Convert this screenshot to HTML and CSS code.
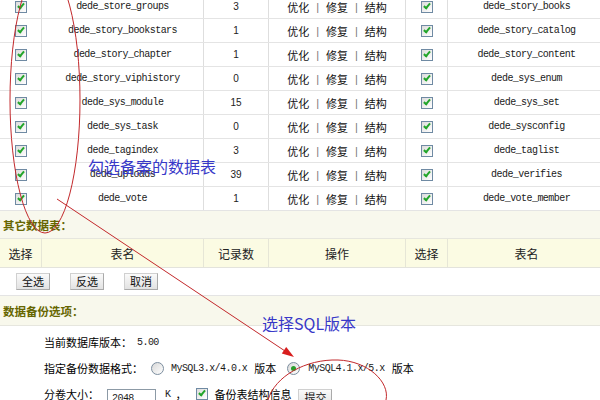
FILE: index.html
```
<!DOCTYPE html>
<html lang="zh">
<head>
<meta charset="utf-8">
<link rel="stylesheet" href="styles.css">
</head>
<body>
<div class="page">
  <div class="tbl">
    <div class="row"><div class="c"><span class="cb"></span></div><div class="c mono">dede_store_groups</div><div class="c num">3</div><div class="c ops"><span>优化</span><span class="sep">|</span><span>修复</span><span class="sep">|</span><span>结构</span></div><div class="c"><span class="cb"></span></div><div class="c mono">dede_story_books</div></div>
    <div class="row"><div class="c"><span class="cb"></span></div><div class="c mono">dede_story_bookstars</div><div class="c num">1</div><div class="c ops"><span>优化</span><span class="sep">|</span><span>修复</span><span class="sep">|</span><span>结构</span></div><div class="c"><span class="cb"></span></div><div class="c mono">dede_story_catalog</div></div>
    <div class="row"><div class="c"><span class="cb"></span></div><div class="c mono">dede_story_chapter</div><div class="c num">1</div><div class="c ops"><span>优化</span><span class="sep">|</span><span>修复</span><span class="sep">|</span><span>结构</span></div><div class="c"><span class="cb"></span></div><div class="c mono">dede_story_content</div></div>
    <div class="row"><div class="c"><span class="cb"></span></div><div class="c mono">dede_story_viphistory</div><div class="c num">0</div><div class="c ops"><span>优化</span><span class="sep">|</span><span>修复</span><span class="sep">|</span><span>结构</span></div><div class="c"><span class="cb"></span></div><div class="c mono">dede_sys_enum</div></div>
    <div class="row"><div class="c"><span class="cb"></span></div><div class="c mono">dede_sys_module</div><div class="c num">15</div><div class="c ops"><span>优化</span><span class="sep">|</span><span>修复</span><span class="sep">|</span><span>结构</span></div><div class="c"><span class="cb"></span></div><div class="c mono">dede_sys_set</div></div>
    <div class="row"><div class="c"><span class="cb"></span></div><div class="c mono">dede_sys_task</div><div class="c num">0</div><div class="c ops"><span>优化</span><span class="sep">|</span><span>修复</span><span class="sep">|</span><span>结构</span></div><div class="c"><span class="cb"></span></div><div class="c mono">dede_sysconfig</div></div>
    <div class="row"><div class="c"><span class="cb"></span></div><div class="c mono">dede_tagindex</div><div class="c num">3</div><div class="c ops"><span>优化</span><span class="sep">|</span><span>修复</span><span class="sep">|</span><span>结构</span></div><div class="c"><span class="cb"></span></div><div class="c mono">dede_taglist</div></div>
    <div class="row"><div class="c"><span class="cb"></span></div><div class="c mono">dede_uploads</div><div class="c num">39</div><div class="c ops"><span>优化</span><span class="sep">|</span><span>修复</span><span class="sep">|</span><span>结构</span></div><div class="c"><span class="cb"></span></div><div class="c mono">dede_verifies</div></div>
    <div class="row"><div class="c"><span class="cb"></span></div><div class="c mono">dede_vote</div><div class="c num">1</div><div class="c ops"><span>优化</span><span class="sep">|</span><span>修复</span><span class="sep">|</span><span>结构</span></div><div class="c"><span class="cb"></span></div><div class="c mono">dede_vote_member</div></div>
  </div>
  <div class="sect s1">其它数据表：</div>
  <div class="row head"><div class="c">选择</div><div class="c">表名</div><div class="c">记录数</div><div class="c">操作</div><div class="c">选择</div><div class="c">表名</div></div>
  <div class="btns"><button class="btn">全选</button><button class="btn">反选</button><button class="btn">取消</button></div>
  <div class="sect s2">数据备份选项：</div>
  <div class="form">
    <div class="frow">当前数据库版本：<span class="mono ver">5.00</span></div>
    <div class="frow">指定备份数据格式：<span class="radio r1"></span><span class="mono">MySQL3.x/4.0.x</span><span class="ban">版本</span><span class="radio r2 on"></span><span class="mono">MySQL4.1.x/5.x</span><span class="ban">版本</span></div>
    <div class="frow">分卷大小：<span class="inp mono">2048</span><span class="mono kk">K</span><span class="comma">，</span><span class="cb cb2"></span><span class="lbl">备份表结构信息</span><button class="btn sub">提交</button></div>
  </div>
  <svg class="anno" width="600" height="400" viewBox="0 0 600 400">
    <ellipse cx="45" cy="100" rx="35" ry="133" fill="none" stroke="#c2282b" stroke-width="1"/>
    <path d="M268 400 C275 376 306 359 338 360 C368 361 390 382 386 400" fill="none" stroke="#c2282b" stroke-width="1"/>
    <line x1="57" y1="199" x2="285" y2="351" stroke="#c2282b" stroke-width="1"/>
    <polygon points="294,357 281.8,353.6 286.2,347" fill="#d81e1e"/>
  </svg>
  <div class="note n1">勾选备案的数据表</div>
  <div class="note n2">选择SQL版本</div>
</div>
</body>
</html>
```
FILE: styles.css
```
html, body {
  margin: 0;
  padding: 0;
  background: #fff;
  overflow: hidden;
}
.page {
  position: relative;
  width: 600px;
  height: 400px;
  overflow: hidden;
  font-family: "Noto Sans CJK SC", "Liberation Sans", sans-serif;
  font-size: 11px;
  color: #111;
}
.tbl {
  margin-top: -5px;
}
.row {
  display: grid;
  grid-template-columns: 42px 162px 65px 137px 42px 158px;
  width: 606px;
  height: 24px;
  box-sizing: border-box;
  border-bottom: 1px solid #e4e4e4;
}
.c {
  display: flex;
  align-items: center;
  justify-content: center;
  border-right: 1px solid #dedede;
  box-sizing: border-box;
  white-space: nowrap;
}
.mono {
  font-family: "Liberation Mono", monospace;
  font-size: 10px;
  letter-spacing: -0.55px;
  color: #1a1a1a;
}
.num {
  font-family: "Liberation Sans", sans-serif;
  font-size: 10px;
  color: #222;
}
.ops {
  color: #111;
}
.sep {
  margin: 0 7px;
  color: #777;
  font-family: "Liberation Sans", sans-serif;
}
.cb {
  position: relative;
  display: inline-block;
  width: 10px;
  height: 10px;
  border: 1px solid #6f8aa3;
  background: linear-gradient(135deg, #dcdcdc, #ffffff);
}
.cb::after {
  content: "";
  position: absolute;
  left: 3px;
  top: 0px;
  width: 2px;
  height: 5px;
  border-right: 2px solid #22a52a;
  border-bottom: 2px solid #22a52a;
  transform: rotate(40deg);
}
.sect {
  font-weight: bold;
  color: #666600;
  font-size: 11.5px;
  padding-left: 3px;
  display: flex;
  align-items: center;
  box-sizing: border-box;
  border-bottom: 1px solid #e6e6de;
}
.s1 {
  height: 28px;
  background: #f8f8ed;
}
.s2 {
  height: 30px;
  background: #f8f8ec;
}
.head {
  height: 29px;
  background: #fbfbe3;
  font-size: 12px;
  color: #222;
  border-bottom: 1px solid #e3e3dc;
}
.head .c {
  border-right-color: #e6e6d6;
}
.btns {
  height: 28px;
  box-sizing: border-box;
  border-bottom: 1px solid #e4e4e4;
  display: flex;
  align-items: center;
  padding-left: 16px;
  gap: 20px;
}
.btn {
  height: 17px;
  padding: 0 5px;
  margin: 0;
  font-family: "Noto Sans CJK SC", sans-serif;
  font-size: 11px;
  line-height: 15px;
  color: #111;
  background: linear-gradient(#fafafa, #e2e2e2);
  border: 1px solid #d0d0d0;
  border-right-color: #aaa;
  border-bottom-color: #aaa;
  border-radius: 0;
}
.form {
  padding: 3px 0 0 44px;
}
.frow {
  height: 26px;
  display: flex;
  align-items: center;
  white-space: nowrap;
  color: #000;
}
.ver {
  margin-left: 5px;
}
.ban {
  margin-left: 7px;
}
.radio {
  position: relative;
  display: inline-block;
  width: 11px;
  height: 11px;
  border-radius: 50%;
  border: 1px solid #7c8e9f;
  background: linear-gradient(135deg, #d8d8d8, #ffffff);
}
.r1 {
  margin: 0 7px 0 8px;
}
.r2 {
  margin: 0 8px 0 11px;
}
.radio.on::after {
  content: "";
  position: absolute;
  left: 3px;
  top: 3px;
  width: 5px;
  height: 5px;
  border-radius: 50%;
  background: #2a9d2a;
}
.inp {
  display: inline-block;
  width: 43px;
  height: 16px;
  margin-left: 8px;
  padding-left: 4px;
  margin-top: 6px;
  border: 1px solid #8c9aa6;
  border-bottom: none;
  line-height: 18px;
  background: #fff;
}
.kk {
  margin-left: 9px;
}
.comma {
  margin-left: 5px;
}
.cb2 {
  margin-left: 10px;
}
.lbl {
  margin-left: 6px;
}
.sub {
  margin-left: 7px;
  margin-top: 7px;
  height: 17px;
}
.anno {
  position: absolute;
  left: 0;
  top: 0;
  pointer-events: none;
}
.note {
  position: absolute;
  font-family: "Noto Sans CJK SC", sans-serif;
  font-size: 16px;
  line-height: 18px;
  color: #3838c8;
  white-space: nowrap;
}
.n1 {
  left: 88px;
  top: 157px;
}
.n2 {
  left: 262px;
  top: 314px;
}
```
